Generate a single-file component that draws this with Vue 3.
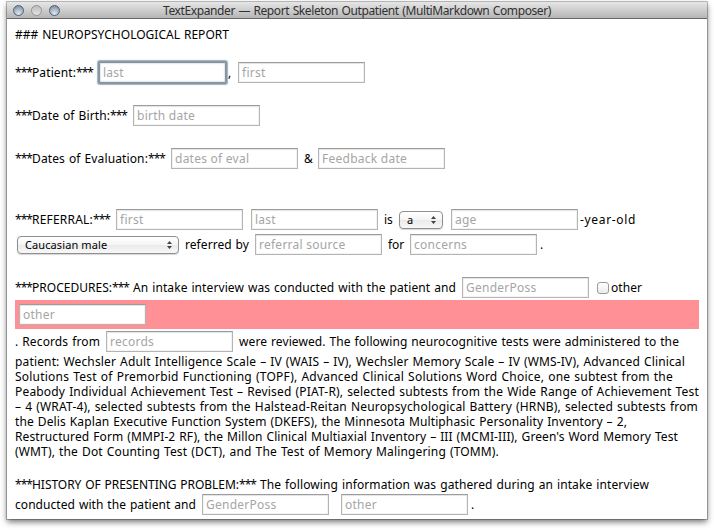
<script setup>
import { onMounted, ref } from 'vue'

const t = (text, width, gap = 0) => ({ kind: 'text', text, width, gap })
const strong = (text, width) => [t('***', 17), t(text, width), t('***', 17)]
const field = (hint, gap = 6, focused = false) => ({ kind: 'field', hint, gap, focused })
const select = (label, width, gap = 0) => ({ kind: 'select', label, width, gap })
const check = (gap) => ({ kind: 'check', gap })

const rows = [
  { type: 'line', space: 8, items: [t('### NEUROPSYCHOLOGICAL REPORT', 214)] },
  { type: 'form', space: 20, items: [...strong('Patient:', 44), field('last', 6, true), t(',', 3, 2), field('first', 7)] },
  { type: 'form', space: 22, items: [...strong('Date of Birth:', 78), field('birth date')] },
  { type: 'form', space: 22, items: [...strong('Dates of Evaluation:', 116), field('dates of eval'), t('&', 9, 6), field('Feedback date', 5)] },
  { type: 'form', space: 40, items: [...strong('REFERRAL:', 61), field('first'), field('last', 8), t('is', 9, 6), select('a', 44, 6), field('age', 8), t('-year-old', 56, 2)] },
  { type: 'form', space: 4, items: [select('Caucasian male', 162, 2), t('referred by', 64, 6), field('referral source'), t('for', 16, 6), field('concerns'), t('.', 3, 3)] },
  { type: 'form', space: 22, items: [...strong('PROCEDURES:', 80), t('An intake interview was conducted with the patient and', 323, 4), field('GenderPoss'), check(8), t('other', 31, 2)] },
  { type: 'band', space: 2, items: [field('other', 4)] },
  { type: 'form', space: 2, items: [t('. Records from', 85), field('records'), t('were reviewed. The following neurocognitive tests were administered to the', 440, 6)] },
  { type: 'line', space: 2, items: [t('patient: Wechsler Adult Intelligence Scale – IV (WAIS – IV), Wechsler Memory Scale – IV (WMS-IV), Advanced Clinical', 670)] },
  { type: 'line', space: 0, items: [t('Solutions Test of Premorbid Functioning (TOPF), Advanced Clinical Solutions Word Choice, one subtest from the', 658)] },
  { type: 'line', space: 0, items: [t('Peabody Individual Achievement Test – Revised (PIAT-R), selected subtests from the Wide Range of Achievement Test', 684)] },
  { type: 'line', space: 0, items: [t('– 4 (WRAT-4), selected subtests from the Halstead-Reitan Neuropsychological Battery (HRNB), selected subtests from', 683)] },
  { type: 'line', space: 0, items: [t('the Delis Kaplan Executive Function System (DKEFS), the Minnesota Multiphasic Personality Inventory – 2,', 612)] },
  { type: 'line', space: 0, items: [t("Restructured Form (MMPI-2 RF), the Millon Clinical Multiaxial Inventory – III (MCMI-III), Green's Word Memory Test", 663)] },
  { type: 'line', space: 0, items: [t('(WMT), the Dot Counting Test (DCT), and The Test of Memory Malingering (TOMM).', 484)] },
  { type: 'line', space: 18, items: [...strong('HISTORY OF PRESENTING PROBLEM:', 207), t('The following information was gathered during an intake interview', 389, 4)] },
  { type: 'form', space: 2, items: [t('conducted with the patient and', 181), field('GenderPoss'), field('other', 12), t('.', 3, 3)] },
]

// Tracks each run of text so that it fills its measured column.
const root = ref(null)
onMounted(() => {
  root.value.querySelectorAll('[data-fit]').forEach((el) => {
    const inner = el.firstElementChild
    const count = inner.textContent.length
    if (count < 3) return
    const spare = Number(el.dataset.fit) - inner.getBoundingClientRect().width
    inner.style.letterSpacing = `${spare / count}px`
  })
})
</script>

<template>
  <div class="desktop" ref="root">
    <section class="window">
      <header class="titlebar">
        <div class="lights">
          <i class="light"></i>
          <i class="light pale"></i>
          <i class="light"></i>
        </div>
        <h1 class="title" data-fit="388"><span>TextExpander — Report Skeleton Outpatient (MultiMarkdown Composer)</span></h1>
      </header>
      <main class="sheet">
        <div v-for="(row, r) in rows" :key="r" :class="['row', row.type]" :style="{ marginTop: row.space + 'px' }">
          <template v-for="(item, i) in row.items" :key="i">
            <span
              v-if="item.kind === 'text'"
              class="text"
              :data-fit="item.width"
              :style="{ width: item.width + 'px', marginLeft: item.gap + 'px' }"
            ><span>{{ item.text }}</span></span>
            <input
              v-else-if="item.kind === 'field'"
              type="text"
              :class="['field', { focused: item.focused }]"
              :placeholder="item.hint"
              :style="{ marginLeft: item.gap + 'px' }"
            />
            <button
              v-else-if="item.kind === 'select'"
              type="button"
              class="select"
              :style="{ width: item.width + 'px', marginLeft: item.gap + 'px' }"
            >
              <span>{{ item.label }}</span>
              <svg width="5" height="8" viewBox="0 0 5 8"><path d="M0 3 2.5 0 5 3zM0 5h5L2.5 8z" fill="#444" /></svg>
            </button>
            <i v-else class="check" :style="{ marginLeft: item.gap + 'px' }"></i>
          </template>
        </div>
      </main>
    </section>
  </div>
</template>

<style>
body {
  background: #fff;
}
</style>

<style scoped>
.desktop {
  box-sizing: border-box;
  width: 714px;
  height: 530px;
  padding: 2px 7px 11px;
  overflow: hidden;
  font-family: "Noto Sans", "Open Sans", sans-serif;
  font-size: 12px;
  color: #000;
}
.window {
  height: 517px;
  background: #fff;
  box-shadow: 0 0 0 1px rgba(0, 0, 0, 0.24), 0 3px 6px rgba(0, 0, 0, 0.55);
}
.titlebar {
  box-sizing: border-box;
  display: grid;
  grid-template-columns: 156px 1fr;
  height: 17px;
  background: linear-gradient(#e6e6e6, #b5b5b5);
  border-bottom: 1px solid #686868;
}
.lights {
  display: flex;
  gap: 7px;
  padding: 3px 0 0 6px;
}
.light {
  box-sizing: border-box;
  width: 11px;
  height: 11px;
  border: 1px solid #56616c;
  border-radius: 50%;
  background: radial-gradient(circle at 50% 85%, #dce7f0 0, #a9b9c8 50%, #8093a5 85%);
}
.light.pale {
  border-color: #939393;
  background: linear-gradient(#bdbdbd, #e2e2e2);
}
.title {
  margin: 0;
  font-size: 12px;
  font-weight: 400;
  line-height: 18px;
  color: #303030;
  white-space: pre;
  word-spacing: 0.7px;
}
.sheet {
  display: flow-root;
  padding: 0 8px;
}
.row {
  display: flex;
  align-items: center;
  height: 21px;
  line-height: 21px;
}
.row.line {
  height: 15px;
  line-height: 15px;
}
.row.band {
  height: 29px;
  background: #ff9096;
}
.text {
  flex: none;
  white-space: pre;
  word-spacing: 0.7px;
}
.field {
  flex: none;
  box-sizing: border-box;
  width: 127px;
  height: 21px;
  margin: 0;
  padding: 0 2px;
  border: 1px solid #b4b4b4;
  border-top-color: #9c9c9c;
  border-radius: 0;
  outline: 0;
  background: #fff;
  box-shadow: inset 0 1px 1px #e4e4e4, inset 0 0 0 1px #f3f3f3;
  font: inherit;
  letter-spacing: 0.25px;
  text-indent: 1px;
}
.field::placeholder {
  color: #a5a5a5;
  opacity: 1;
}
.field.focused {
  border-color: #8693a1;
  border-radius: 1px;
  box-shadow: 0 0 0 1px #8997a5, 0 0 1px 2px #a5b0ba, inset 0 0 2px #a8b2bc;
}
.select {
  flex: none;
  box-sizing: border-box;
  display: flex;
  align-items: center;
  justify-content: space-between;
  height: 18px;
  margin: 1px 0 0;
  padding: 0 6px 0 7px;
  border: 1px solid #8f8f8f;
  border-radius: 4px;
  background: linear-gradient(#fff 0%, #f5f5f5 48%, #eaeaea 52%, #f8f8f8 100%);
  box-shadow: 0 1px 1px rgba(0, 0, 0, 0.16);
  font: 11px/16px "Noto Sans", "Open Sans", sans-serif;
  letter-spacing: 0.1px;
  color: #000;
}
.check {
  flex: none;
  box-sizing: border-box;
  width: 12px;
  height: 12px;
  margin-top: 1px;
  border: 1px solid #9b9b9b;
  border-radius: 3px;
  background: linear-gradient(#fff, #ececec);
}
</style>
